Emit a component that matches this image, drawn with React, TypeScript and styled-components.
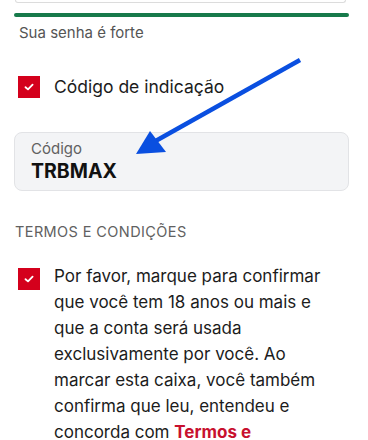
import React from 'react';
import styled, { createGlobalStyle } from 'styled-components';

const GlobalStyle = createGlobalStyle`
  html, body {
    margin: 0;
    padding: 0;
    background: #ffffff;
  }
  body {
    font-family: Inter, 'Noto Sans', 'Liberation Sans', sans-serif;
    color: #1c1c1c;
  }
`;

const Page = styled.div`
  position: relative;
  width: 368px;
  height: 440px;
  overflow: hidden;
  box-sizing: border-box;
  padding: 0 19px 0 14px;
`;

const TopInput = styled.div`
  height: 2px;
  margin: 0 3px 0 1px;
  border: 1px solid #dcdcdc;
  border-top: none;
  border-radius: 0 0 6px 6px;
`;

const StrengthBar = styled.div<{ $color: string }>`
  height: 4px;
  margin-top: 10px;
  border-radius: 2px;
  background: ${(p) => p.$color};
`;

const Hint = styled.div`
  margin: 6px 0 0 5px;
  font-size: 15px;
  line-height: 20px;
  color: #555555;
`;

const CheckRow = styled.label<{ $top: number }>`
  display: flex;
  align-items: flex-start;
  gap: 14px;
  margin-top: ${(p) => p.$top}px;
  padding-left: 4px;
`;

const Box = styled.span<{ $offset: number }>`
  flex: none;
  width: 22px;
  height: 22px;
  margin-top: ${(p) => p.$offset}px;
  background: #d4001c;
  display: flex;
  align-items: center;
  justify-content: center;
`;

const RowLabel = styled.span`
  font-size: 17.5px;
  line-height: 22px;
  color: #1c1c1c;
`;

const CodeField = styled.div`
  margin-top: 34px;
  height: 59px;
  box-sizing: border-box;
  padding: 7px 16px 0;
  background: #f3f4f6;
  border: 1px solid #e2e3e6;
  border-radius: 8px;
`;

const FieldLabel = styled.div`
  font-size: 15px;
  line-height: 18px;
  color: #616161;
`;

const FieldValue = styled.div`
  font-size: 19.5px;
  line-height: 26px;
  font-weight: 700;
  color: #111111;
`;

const SectionTitle = styled.div`
  margin: 31px 0 0 1px;
  font-size: 14.5px;
  line-height: 20px;
  letter-spacing: 0.4px;
  color: #616161;
`;

const Terms = styled.p`
  margin: 0;
  width: 285px;
  font-size: 17px;
  line-height: 26px;
  color: #1c1c1c;
`;

const TermsLink = styled.a`
  color: #c8102e;
  font-weight: 700;
  text-decoration: none;
`;

const Arrow = styled.svg`
  position: absolute;
  left: 0;
  top: 0;
  pointer-events: none;
`;

const Check = () => (
  <svg width="10" height="8" viewBox="0 0 10 8">
    <path d="M1.5 4.2 L4 6.4 L8.6 1.6" fill="none" stroke="#fff" strokeWidth="1.8" strokeLinecap="round" strokeLinejoin="round" />
  </svg>
);

export default function App() {
  return (
    <>
      <GlobalStyle />
      <Page>
        <TopInput />
        <StrengthBar $color="#177a4b" />
        <Hint>Sua senha é forte</Hint>

        <CheckRow $top={33}>
          <Box $offset={0}>
            <Check />
          </Box>
          <RowLabel>Código de indicação</RowLabel>
        </CheckRow>

        <CodeField>
          <FieldLabel>Código</FieldLabel>
          <FieldValue>TRBMAX</FieldValue>
        </CodeField>

        <SectionTitle>TERMOS E CONDIÇÕES</SectionTitle>

        <CheckRow $top={21}>
          <Box $offset={5}>
            <Check />
          </Box>
          <Terms>
            Por favor, marque para confirmar que você tem 18 anos ou mais e que a conta será usada
            exclusivamente por você. Ao marcar esta caixa, você também confirma que leu, entendeu e
            concorda com <TermsLink href="#">Termos e Condições</TermsLink> e a Política de Privacidade.
          </Terms>
        </CheckRow>

        <Arrow width="368" height="440" viewBox="0 0 368 440">
          <line x1="300" y1="60" x2="152" y2="143" stroke="#0a4fe0" strokeWidth="4.5" strokeLinecap="butt" />
          <polygon points="136,154 150,131 166,152" fill="#0a4fe0" />
        </Arrow>
      </Page>
    </>
  );
}
